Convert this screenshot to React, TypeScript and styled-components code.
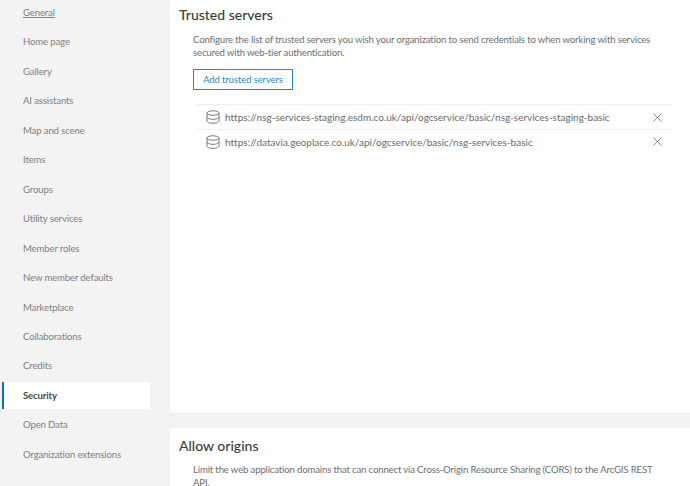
import React from "react";
import styled, { createGlobalStyle } from "styled-components";

const Global = createGlobalStyle`
  html, body { margin: 0; padding: 0; height: 486px; overflow: hidden; background: #f3f3f3; }
  body { font-family: "Lato", "Noto Sans", sans-serif; }
`;

const Page = styled.div`
  display: flex;
  width: 690px;
  height: 486px;
  overflow: hidden;
  background: #f3f3f3;
`;

const Sidebar = styled.nav`
  flex: 0 0 170px;
  display: flex;
  flex-direction: column;
  gap: 2.46px;
  margin-top: -1px;
  padding-left: 2px;
  box-sizing: border-box;
`;

const NavItem = styled.a<{ $active?: boolean; $underline?: boolean }>`
  flex: 0 0 27px;
  width: 148px;
  box-sizing: border-box;
  padding: 7px 0 0 ${(p) => (p.$active ? "19px" : "21px")};
  line-height: 13px;
  font-size: 9.6px;
  letter-spacing: -0.15px;
  color: ${(p) => (p.$active ? "#4a4a4a" : "#808080")};
  font-weight: ${(p) => (p.$active ? 700 : 400)};
  background: ${(p) => (p.$active ? "#fff" : "transparent")};
  border-left: ${(p) => (p.$active ? "2px solid #0079c1" : "none")};
  text-decoration: ${(p) => (p.$underline ? "underline" : "none")};
`;

const Main = styled.main`
  flex: 1;
  display: flex;
  flex-direction: column;
  gap: 14px;
  min-width: 0;
`;

const Panel = styled.section<{ $fill?: boolean }>`
  background: #fff;
  box-sizing: border-box;
  padding: ${(p) => (p.$fill ? "10px 9px 0" : "7px 9px 0")};
  flex: ${(p) => (p.$fill ? "1 1 auto" : "0 0 414px")};
  border-bottom: ${(p) => (p.$fill ? "none" : "1px solid #ececec")};
`;

const Title = styled.h2`
  margin: 0;
  font-size: 14px;
  line-height: 16px;
  font-weight: 500;
  color: #3c3c3c;
`;

const Body = styled.div`
  padding: 0 0 0 14px;
`;

const Description = styled.p<{ $top: number }>`
  margin: ${(p) => p.$top}px 0 0;
  font-size: 9.6px;
  line-height: 13.2px;
  color: #6e6e6e;
  width: 464px;
  letter-spacing: -0.16px;
`;

const OutlineButton = styled.button`
  display: block;
  margin-top: 10px;
  width: 100px;
  height: 21px;
  padding: 0;
  background: #fff;
  border: 1px solid #1f8ac9;
  font-family: inherit;
  font-size: 9.4px;
  color: #1f8ac9;
  letter-spacing: -0.05px;
`;

const ServerList = styled.ul`
  list-style: none;
  margin: 14px 0 0 4px;
  padding: 0;
  width: 475px;
`;

const ServerRow = styled.li`
  display: flex;
  align-items: center;
  height: 23.5px;
  box-sizing: content-box;
  padding: 0 10px 0 9px;
  gap: 5px;
  border-top: 1px solid #efefef;
  font-size: 10px;
  color: #6a6a6a;
  letter-spacing: -0.005px;
`;

const ServerUrl = styled.span`
  flex: 1;
  white-space: nowrap;
`;

const Db = () => (
  <svg width="14" height="14" viewBox="0 0 14 14" fill="none" stroke="#777" strokeWidth="1">
    <ellipse cx="7" cy="3" rx="6" ry="2.2" />
    <path d="M1 3v8c0 1.3 2.7 2.3 6 2.3s6-1 6-2.3V3" />
    <path d="M1 7c0 1.3 2.7 2.3 6 2.3s6-1 6-2.3" />
  </svg>
);

const Close = () => (
  <svg width="9" height="9" viewBox="0 0 9 9" fill="none" stroke="#888" strokeWidth="1">
    <path d="M.5.5l8 8M8.5.5l-8 8" />
  </svg>
);

const items = [
  "General", "Home page", "Gallery", "AI assistants", "Map and scene", "Items", "Groups",
  "Utility services", "Member roles", "New member defaults", "Marketplace", "Collaborations",
  "Credits", "Security", "Open Data", "Organization extensions",
];

export default function App() {
  return (
    <Page>
      <Global />
      <Sidebar>
        {items.map((t) => (
          <NavItem key={t} $active={t === "Security"} $underline={t === "General"}>{t}</NavItem>
        ))}
      </Sidebar>
      <Main>
        <Panel>
          <Title>Trusted servers</Title>
          <Body>
            <Description $top={10}>
              Configure the list of trusted servers you wish your organization to send credentials to when working with services secured with web-tier authentication.
            </Description>
            <OutlineButton>Add trusted servers</OutlineButton>
            <ServerList>
              <ServerRow><Db /><ServerUrl>https://nsg-services-staging.esdm.co.uk/api/ogcservice/basic/nsg-services-staging-basic</ServerUrl><Close /></ServerRow>
              <ServerRow><Db /><ServerUrl>https://datavia.geoplace.co.uk/api/ogcservice/basic/nsg-services-basic</ServerUrl><Close /></ServerRow>
            </ServerList>
          </Body>
        </Panel>
        <Panel $fill>
          <Title>Allow origins</Title>
          <Body>
            <Description $top={9}>
              Limit the web application domains that can connect via Cross-Origin Resource Sharing (CORS) to the ArcGIS REST API.
            </Description>
          </Body>
        </Panel>
      </Main>
    </Page>
  );
}
